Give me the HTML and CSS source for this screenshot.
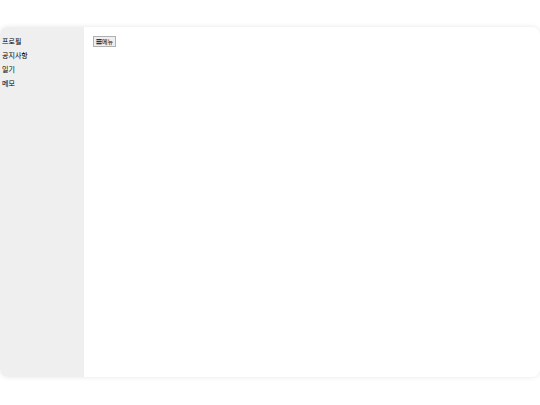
FILE: index.html
```html
<!DOCTYPE html>
<html lang="ko">
<head>
<meta charset="utf-8">
<meta name="viewport" content="width=device-width, initial-scale=1">
<title>메뉴</title>
<link rel="stylesheet" href="styles.css">
</head>
<body>
<div class="panel">
  <nav class="sidebar">
    <ul class="menu">
      <li><a href="#">프로필</a></li>
      <li><a href="#">공지사항</a></li>
      <li><a href="#">일기</a></li>
      <li><a href="#">메모</a></li>
    </ul>
  </nav>
  <main class="content">
    <button class="toggle" type="button">☰메뉴</button>
  </main>
</div>
</body>
</html>
```

FILE: styles.css
```css
* {
  box-sizing: border-box;
}

body {
  margin: 0;
  min-height: 100vh;
  padding: 27px 0 28px;
  display: flex;
  background: #fff;
  color: #000;
  font-family: "Noto Sans CJK KR", sans-serif;
}

.panel {
  flex: 1;
  display: flex;
  border-radius: 8px;
  overflow: hidden;
  background: #fff;
  box-shadow: 0 0 5px rgba(0, 0, 0, 0.1);
}

.sidebar {
  flex: 0 0 84px;
  padding: 9px 2px;
  background: #efefef;
}

.menu {
  margin: 0;
  padding: 0;
  list-style: none;
  display: grid;
  gap: 4px;
}

.menu li {
  font-size: 7px;
  line-height: 10px;
}

.menu a {
  color: inherit;
  text-decoration: none;
}

.content {
  flex: 1;
  padding: 9px;
}

.toggle {
  display: block;
  padding: 0 2px;
  border: 1px solid #b0b0b0;
  border-radius: 0;
  background: #efefef;
  color: #000;
  font-family: inherit;
  font-size: 6px;
  line-height: 9px;
}
```
